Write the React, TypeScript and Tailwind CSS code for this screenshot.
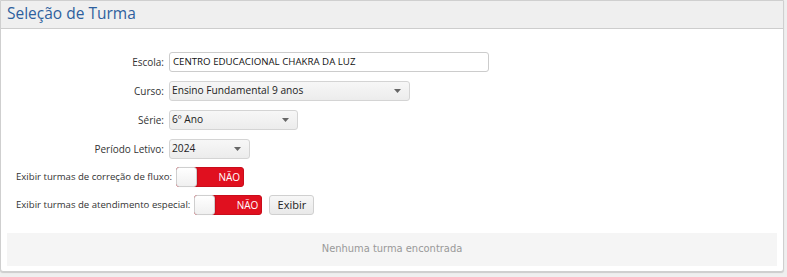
import React from "react";

function Select({ value, width }: { value: string; width: string }) {
  return (
    <div
      className={`${width} h-[20px] flex items-center justify-between rounded-[3px] border border-[#d4d4d4] bg-gradient-to-b from-[#f7f7f7] to-[#ececec] pl-[2px] pr-[8px] text-[10.2px] text-[#222]`}
    >
      <span>{value}</span>
      <svg width="7" height="4" viewBox="0 0 7 4">
        <path d="M0 0H7L3.5 4Z" fill="#666" />
      </svg>
    </div>
  );
}

function Toggle() {
  return (
    <div className="relative w-[68px] h-[20px] rounded-[3px] bg-[#e0101f] border border-[#c90d1b] flex items-center justify-end pr-[3px]">
      <span className="text-[10px] text-white">NÃO</span>
      <div className="absolute left-[-1px] top-[-1px] w-[21px] h-[20px] rounded-[3px] bg-gradient-to-b from-white to-[#f0f0f0] border border-[#cfcfcf] shadow-[1px_0_1px_rgba(0,0,0,0.1)]" />
    </div>
  );
}

export default function App() {
  return (
    <div
      className="w-[787px] h-[277px] bg-[#efefef]"
      style={{ fontFamily: '"Open Sans", "Noto Sans", sans-serif' }}
    >
      <div className="w-[784px] bg-white border border-[#cfcfcf] rounded-b-[3px] shadow-[0_1px_1px_rgba(0,0,0,0.15)]">
        <div className="h-[28px] bg-[#efefef] border-b border-[#cdcdcd] flex items-center pl-[6px]">
          <span className="text-[15.5px] text-[#2e5f9e] leading-none mt-[-2px]">Seleção de Turma</span>
        </div>
        <div className="pt-[23px] pb-[5px] px-[6px]">
          <div className="flex flex-col">
            <div className="flex items-center h-[20px]">
              <div className="w-[162px] text-right pr-[5px] text-[10px] text-[#333]">Escola:</div>
              <div className="w-[320px] h-[20px] border border-[#ccc] rounded-[3px] flex items-center pl-[3px] text-[9.7px] text-[#111]">
                CENTRO EDUCACIONAL CHAKRA DA LUZ
              </div>
            </div>
            <div className="flex items-center h-[20px] mt-[9px]">
              <div className="w-[162px] text-right pr-[5px] text-[10px] text-[#333]">Curso:</div>
              <Select value="Ensino Fundamental 9 anos" width="w-[241px]" />
            </div>
            <div className="flex items-center h-[20px] mt-[9px]">
              <div className="w-[162px] text-right pr-[5px] text-[10px] text-[#333]">Série:</div>
              <Select value="6º Ano" width="w-[129px]" />
            </div>
            <div className="flex items-center h-[20px] mt-[9px]">
              <div className="w-[162px] text-right pr-[5px] text-[10px] text-[#333]">Período Letivo:</div>
              <Select value="2024" width="w-[81px]" />
            </div>
            <div className="flex items-center h-[20px] mt-[8px] pl-[9px]">
              <span className="text-[9.6px] text-[#333] mr-[4px]">Exibir turmas de correção de fluxo:</span>
              <Toggle />
            </div>
            <div className="flex items-center h-[20px] mt-[8px] pl-[9px]">
              <span className="text-[9.6px] text-[#333] mr-[4px]">Exibir turmas de atendimento especial:</span>
              <Toggle />
              <button className="ml-[7px] h-[20px] w-[45px] rounded-[3px] border border-[#d0d0d0] bg-gradient-to-b from-[#f7f7f7] to-[#e9e9e9] text-[11px] text-[#222]">
                Exibir
              </button>
            </div>
          </div>
          <div
            className="mt-[18px] h-[33px] bg-[#f5f5f5] flex items-center justify-center text-[11px] text-[#999]"
            style={{ fontFamily: '"DejaVu Sans Condensed", "Open Sans", sans-serif' }}
          >
            Nenhuma turma encontrada
          </div>
        </div>
      </div>
    </div>
  );
}
